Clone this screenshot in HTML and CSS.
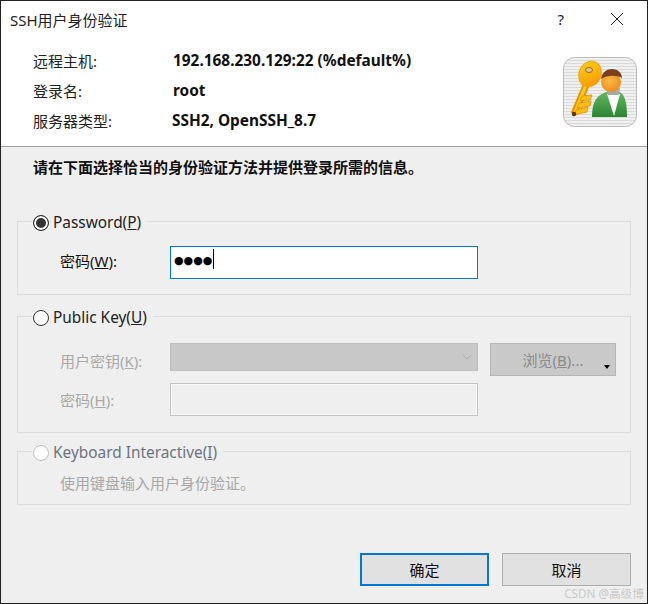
FILE: index.html
```html
<!DOCTYPE html>
<html lang="zh">
<head>
<meta charset="utf-8">
<title>SSH用户身份验证</title>
<link rel="stylesheet" href="styles.css">
</head>
<body>
<div class="window">
  <header class="top">
    <div class="titlebar">
      <span class="title">SSH用户身份验证</span>
      <span class="help">?</span>
      <svg class="close" width="12" height="12" viewBox="0 0 12 12"><path d="M0 0L12 12M12 0L0 12" stroke="#222" stroke-width="1" fill="none"/></svg>
    </div>
    <div class="info">
      <dl class="facts">
        <dt>远程主机:</dt><dd>192.168.230.129:22 (%default%)</dd>
        <dt>登录名:</dt><dd>root</dd>
        <dt>服务器类型:</dt><dd class="nudge">SSH2, OpenSSH_8.7</dd>
      </dl>
      <svg class="logo" width="74" height="70" viewBox="0 0 74 70">
        <defs>
          <pattern id="stripes" width="4" height="3" patternUnits="userSpaceOnUse">
            <rect width="4" height="3" fill="#f0f0f0"/><rect width="4" height="1" fill="#dadada"/>
          </pattern>
          <linearGradient id="gold" x1="0" y1="0" x2="1" y2="1"><stop offset="0" stop-color="#ffd21c"/><stop offset="1" stop-color="#f59300"/></linearGradient>
          <radialGradient id="face" cx=".45" cy=".45" r=".7"><stop offset="0" stop-color="#fdbb4a"/><stop offset="1" stop-color="#ea8410"/></radialGradient>
          <linearGradient id="suit" x1="0" y1="0" x2="0" y2="1"><stop offset="0" stop-color="#62b85e"/><stop offset="1" stop-color="#2a8432"/></linearGradient>
        </defs>
        <rect x=".5" y=".5" width="73" height="69" rx="11" fill="url(#stripes)" stroke="#bdbdbd"/>
        <path d="M24 26L11 57" stroke="#ee9200" stroke-width="7" fill="none"/>
        <path d="M23 28L12 55" stroke="#ffcf1a" stroke-width="3" fill="none"/>
        <path d="M19 39L29 38L27 43L17 44ZM16 46L28 44L27 49L14 51ZM13 53L25 50L24 55L11 58Z" fill="#fbbf0e" stroke="#e88a00" stroke-width=".8"/>
        <circle cx="11" cy="57" r="2.200" fill="#5e3510"/>
        <ellipse cx="27" cy="17" rx="11" ry="13" transform="rotate(25 27 17)" fill="url(#gold)" stroke="#f0a000"/>
        <ellipse cx="26" cy="13" rx="3.500" ry="2.500" fill="#d8c8a0" stroke="#a86a00"/>
        <path d="M29 60C29 47 32 39 43 35L57 35C63 39 64 49 64 60Z" fill="url(#suit)"/>
        <path d="M44 37L57 37L51 59Z" fill="#fff"/>
        <path d="M43 31L57 31L56 38L45 38Z" fill="#a9a9a9"/>
        <circle cx="48" cy="25" r="10" fill="url(#face)"/>
        <path d="M38 22C39 15 44 12 49 12C55 12 59 16 59 21C54 18 44 18 38 22Z" fill="#7c3f1c"/>
      </svg>
    </div>
  </header>
  <main class="body">
    <p class="lead">请在下面选择恰当的身份验证方法并提供登录所需的信息。</p>
    <fieldset class="group g1">
      <legend class="legend"><span class="radio on"></span><span>Password(<u>P</u>)</span></legend>
      <div class="row r-one">
        <span class="lbl">密码(<u>W</u>):</span>
        <div class="field focus"><span class="dots">●●●●</span><span class="caret"></span></div>
      </div>
    </fieldset>
    <fieldset class="group g2">
      <legend class="legend"><span class="radio"></span><span>Public Key(<u>U</u>)</span></legend>
      <div class="row r-key">
        <span class="lbl off">用户密钥(<u>K</u>):</span>
        <div class="select"><svg width="10" height="6" viewBox="0 0 10 6"><path d="M.5 .5L5 5L9.500 .5" stroke="#acacac" fill="none"/></svg></div>
        <div class="browse"><span>浏览(<u>B</u>)...</span><i class="arrow"></i></div>
      </div>
      <div class="row r-pass">
        <span class="lbl off">密码(<u>H</u>):</span>
        <div class="field dis"></div>
      </div>
    </fieldset>
    <fieldset class="group g3">
      <legend class="legend dim"><span class="radio dis"></span><span>Keyboard Interactive(<u>I</u>)</span></legend>
      <p class="note off">使用键盘输入用户身份验证。</p>
    </fieldset>
    <div class="actions">
      <button class="btn primary" type="button">确定</button>
      <button class="btn" type="button">取消</button>
    </div>
  </main>
  <span class="mark">CSDN @高级博</span>
</div>
</body>
</html>
```
FILE: styles.css
```css
* { box-sizing: border-box; }
html, body { margin: 0; padding: 0; }
body {
  font-family: "Noto Sans", "Noto Sans CJK SC", sans-serif;
  font-size: 15px;
  color: #111;
  background: #222;
}
.window {
  position: relative;
  width: 648px;
  height: 604px;
  border: 1px solid #222;
  background: #f0f0f0;
  display: flex;
  flex-direction: column;
  overflow: hidden;
}
.top {
  background: #fff;
  height: 146px;
  border-bottom: 1px solid #a0a0a0;
  flex: none;
}
.titlebar {
  display: flex;
  align-items: center;
  height: 36px;
  padding: 0 24px 0 9px;
}
.title { flex: 1; color: #222; }
.help { margin-right: 47px; color: #222; }
.info {
  display: flex;
  justify-content: space-between;
  padding: 8px 10px 0 32px;
}
.facts {
  margin: 0;
  display: grid;
  grid-template-columns: 140px auto;
  grid-auto-rows: 30px;
  align-items: center;
}
.facts dt { font-weight: 400; color: #222; }
.facts dd { margin: 0; font-weight: 700; font-size: 15.400px; color: #111; }
.facts .nudge { margin-left: -1px; }
.logo { margin-top: 12px; }
.body {
  flex: 1;
  padding: 0 16px;
  background: #efefef;
  display: flex;
  flex-direction: column;
}
.lead {
  margin: 10px 0 0 16px;
  font-weight: 700;
  line-height: 20px;
}
.group {
  margin: 0;
  min-width: 0;
  padding: 0;
  border: 1px solid #dcdcdc;
}
.legend {
  display: flex;
  align-items: center;
  gap: 4px;
  margin-left: 14px;
  padding: 4px 6px 0 1px;
  font-size: 15.400px;
  line-height: 20px;
  height: 24px;
  color: #222;
}
.legend.dim { color: #6c7480; }
.radio {
  width: 16px;
  height: 16px;
  border-radius: 50%;
  border: 1px solid #333;
  background: #fff;
  flex: none;
}
.radio.on { background: #333; box-shadow: inset 0 0 0 2px #fff; }
.radio.dis { border-color: #bfbfbf; }
.g1 { margin-top: 32px; height: 86px; }
.g2 { margin-top: 9px; height: 129px; }
.g3 { margin-top: 6px; height: 66px; }
.row {
  display: flex;
  align-items: center;
  padding-left: 42px;
}
.r-one { margin-top: 12px; }
.r-one .lbl { margin-bottom: 4px; }
.lbl { width: 110px; flex: none; }
.off { color: #a8a8a8; }
.field {
  width: 308px;
  height: 33px;
  flex: none;
  display: flex;
  align-items: center;
  padding-left: 3px;
}
.field.focus { background: #fff; border: 1px solid #0078d7; margin-top: 1px; }
.field.dis { background: #efefef; border: 1px solid #c4c4c4; box-shadow: inset 0 0 0 1px #fafafa; }
.dots { font-family: "DejaVu Sans", sans-serif; font-size: 11px; line-height: 1; color: #000; margin-bottom: 4px; }
.caret { width: 1px; height: 20px; background: #000; margin: 0 0 8px 1px; }
.r-key { margin-top: 15px; align-items: flex-start; }
.r-key .lbl { line-height: 36px; }
.select {
  width: 308px;
  height: 28px;
  flex: none;
  background: #c8c8c8;
  border: 1px solid #bdbdbd;
  display: flex;
  align-items: center;
  justify-content: flex-end;
  padding-right: 5px;
}
.browse {
  position: relative;
  width: 126px;
  height: 33px;
  margin: 0 0 0 12px;
  flex: none;
  background: #c9c9c9;
  border: 1px solid #b5b5b5;
  color: #8a8a8a;
  display: flex;
  align-items: center;
  justify-content: center;
}
.arrow {
  position: absolute;
  right: 5px;
  bottom: 6px;
  border: 3px solid transparent;
  border-top: 4px solid #000;
  border-bottom: 0;
}
.r-pass { margin-top: 4px; }
.note { margin: 10px 0 0 42px; line-height: 20px; }
.actions {
  margin-top: 48px;
  display: flex;
  justify-content: flex-end;
  gap: 13px;
}
.btn {
  width: 129px;
  height: 33px;
  font: inherit;
  color: #111;
  background: #e1e1e1;
  border: 1px solid #adadad;
  padding: 0;
}
.btn.primary { border: 2px solid #0078d7; }
.mark {
  position: absolute;
  right: 3px;
  bottom: 2px;
  font-size: 11.700px;
  color: #c8c8c8;
}
```
